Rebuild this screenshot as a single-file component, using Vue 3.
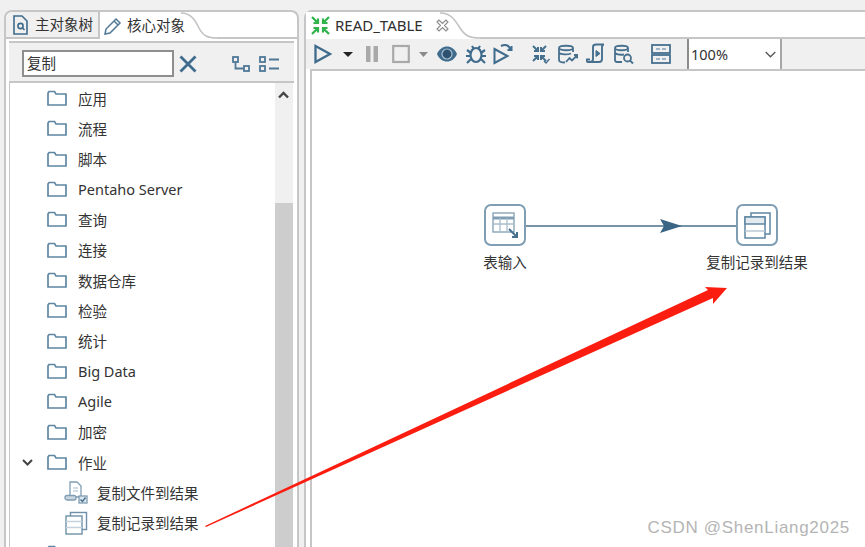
<script setup>
const folders = ['应用', '流程', '脚本', 'Pentaho Server', '查询', '连接', '数据仓库', '检验', '统计', 'Big Data', 'Agile', '加密']
</script>

<template>
  <div class="page">
    <section class="left-panel">
      <div class="tabs">
        <div class="tab tab-idle">
          <svg width="15" height="20" viewBox="0 0 15 20" fill="none" stroke="#3f6b8c" stroke-width="1.6">
            <path d="M1 1h8l5 5v13H1z" />
            <circle cx="7.5" cy="11" r="2.6" />
            <path d="M9.5 13l2 2" />
          </svg>
          <span>主对象树</span>
        </div>
        <div class="tab tab-active">
          <svg width="19" height="20" viewBox="0 0 19 20" fill="none" stroke="#4f7896" stroke-width="1.5">
            <path d="M2 18l1-5L13 3l4 4L7 17z" />
            <path d="M11 5l4 4" />
          </svg>
          <span>核心对象</span>
        </div>
        <svg class="tab-curve" width="36" height="27" viewBox="0 0 36 27" fill="none">
          <path d="M0 1C10 1 14 8 18 16S27 26 36 26" stroke="#c2c2c2" stroke-width="1.6" />
        </svg>
        <div class="tab-rest"></div>
      </div>

      <div class="search-bar">
        <div class="search-input">复制</div>
        <svg class="clear-icon" width="18" height="18" viewBox="0 0 18 18" stroke="#3f6b8c" stroke-width="2.8">
          <path d="M1.500 1.500l15 15M16.500 1.500l-15 15" />
        </svg>
        <svg class="tree-icon" width="18" height="16" viewBox="0 0 18 16" fill="none" stroke="#4f7896" stroke-width="1.8">
          <rect x="1" y="1" width="5" height="5" />
          <rect x="12" y="10" width="5" height="5" />
          <path d="M3.500 6v6.500H12" />
        </svg>
        <svg class="list-icon" width="21" height="16" viewBox="0 0 21 16" fill="none" stroke="#4f7896" stroke-width="1.8">
          <rect x="1" y="1" width="5" height="5" />
          <rect x="1" y="10" width="5" height="5" />
          <path d="M10 3.500h10M10 12.500h10" />
        </svg>
      </div>

      <div class="tree-area">
        <ul class="tree">
          <li v-for="name in folders" :key="name" class="row">
            <svg class="folder" width="20" height="16" viewBox="0 0 20 16" fill="#fff" stroke="#5f86a3" stroke-width="1.7">
              <path d="M1 3v12h18V4H9L7.500 1.500H2z" />
            </svg>
            <span>{{ name }}</span>
          </li>
          <li class="row">
            <svg class="chevron" width="11" height="7" viewBox="0 0 11 7" fill="none" stroke="#444" stroke-width="2">
              <path d="M1 1l4.500 4.500L10 1" />
            </svg>
            <svg class="folder" width="20" height="16" viewBox="0 0 20 16" fill="#fff" stroke="#5f86a3" stroke-width="1.7">
              <path d="M1 3v12h18V4H9L7.500 1.500H2z" />
            </svg>
            <span>作业</span>
          </li>
          <li class="row child">
            <svg width="24" height="24" viewBox="0 0 24 24" fill="#fff" stroke="#7f9db3" stroke-width="1.3">
              <path d="M6 2h7l4 4v11H6z" />
              <path d="M9 8h5M9 11h5" stroke="#c4d2dd" />
              <rect x="1" y="15.500" width="11" height="4.500" rx="2" fill="#c9d6df" />
              <rect x="15" y="16" width="8" height="7" fill="#dfe7ed" />
              <path d="M16.500 19.500l2 2 3-4" stroke="#3f6b8c" fill="none" />
            </svg>
            <span>复制文件到结果</span>
          </li>
          <li class="row child">
            <svg width="24" height="24" viewBox="0 0 24 24" fill="#fff" stroke="#6f90a8" stroke-width="1.4">
              <rect x="6.500" y="1.500" width="16" height="17" />
              <rect x="2" y="5" width="16" height="18" />
              <path d="M2 10.500h16M2 16.500h16" stroke="#c4d2dd" />
            </svg>
            <span>复制记录到结果</span>
          </li>
          <li class="row">
            <svg class="folder" width="20" height="16" viewBox="0 0 20 16" fill="#fff" stroke="#5f86a3" stroke-width="1.7">
              <path d="M1 3v12h18V4H9L7.500 1.500H2z" />
            </svg>
          </li>
        </ul>
        <div class="scrollbar">
          <svg class="scroll-up" width="11" height="8" viewBox="0 0 11 8" fill="none" stroke="#444" stroke-width="2.4">
            <path d="M1 6.500l4.500-4.500L10 6.500" />
          </svg>
          <div class="scroll-thumb"></div>
        </div>
      </div>
    </section>

    <section class="editor">
      <div class="tabs">
        <div class="tab tab-active editor-tab">
          <svg width="19" height="19" viewBox="0 0 19 19" fill="none" stroke="#2fb34a" stroke-width="2.2">
            <path d="M1 1l6 6M7 2.500V7H2.500M18 1l-6 6M12 2.500V7h4.500M1 18l6-6M7 16.500V12H2.500M18 18l-6-6M12 16.500V12h4.500" />
          </svg>
          <span class="editor-title">READ_TABLE</span>
          <svg class="close" width="13" height="13" viewBox="0 0 13 13" fill="#fff" stroke="#8b8b8b" stroke-width="1.1">
            <path d="M1 3l2-2 3.500 3.500L10 1l2 2-3.500 3.500L12 10l-2 2-3.500-3.500L3 12l-2-2 3.500-3.500z" />
          </svg>
        </div>
        <svg class="tab-curve" width="40" height="27" viewBox="0 0 40 27" fill="none">
          <path d="M0 1C11 1 15 8 20 16S30 26 40 26" stroke="#c2c2c2" stroke-width="1.6" />
        </svg>
        <div class="tab-rest"></div>
      </div>

      <div class="toolbar">
        <svg class="ml-3" width="18" height="24" viewBox="0 0 18 24" fill="none" stroke="#3f6b8c" stroke-width="2.3">
          <path d="M1.500 4l14.500 8-14.500 8z" />
        </svg>
        <svg class="ml-11" width="10" height="24" viewBox="0 0 10 24"><path d="M0 10h10l-5 5z" fill="#222" /></svg>
        <svg class="ml-13" width="12" height="24" viewBox="0 0 12 24" fill="#a9a9a9">
          <rect y="4" width="4.500" height="16" /><rect x="7.500" y="4" width="4.500" height="16" />
        </svg>
        <svg class="ml-14" width="18" height="24" viewBox="0 0 18 24" fill="none" stroke="#a9a9a9" stroke-width="2.2">
          <rect x="1.200" y="4" width="15.600" height="16" />
        </svg>
        <svg class="ml-9" width="9" height="24" viewBox="0 0 9 24"><path d="M0 10h9l-4.500 5z" fill="#8a8a8a" /></svg>
        <svg class="ml-9" width="20" height="24" viewBox="0 0 20 24">
          <path d="M0 12C4 2 16 2 20 12 16 22 4 22 0 12z" fill="#3f6b8c" />
          <circle cx="10" cy="12" r="5" fill="#2c5270" stroke="#a7bfd0" stroke-width="1.200" />
        </svg>
        <svg class="ml-9" width="20" height="24" viewBox="0 0 20 24" fill="none" stroke="#3f6b8c" stroke-width="2.200">
          <ellipse cx="10" cy="13" rx="5.500" ry="7" />
          <path d="M6 4l2 3M14 4l-2 3M1 8l4 3M19 8l-4 3M0 14h4M20 14h-4M1 21l4-4M19 21l-4-4" />
        </svg>
        <svg class="ml-7" width="20" height="24" viewBox="0 0 20 24" fill="none" stroke="#3f6b8c" stroke-width="2">
          <path d="M1.500 7l13 7-13 7z" />
          <path d="M8 4c4-2 8-1 9 3M18.500 4v4h-4" />
        </svg>
        <svg class="ml-19" width="18" height="24" viewBox="0 0 18 24" fill="none" stroke="#46708e" stroke-width="2">
          <path d="M1 4l5 5M6 5v4H2M14 4l-5 5M9 5v4h4M1 19l5-5M6 18v-4H2M14 19l-5-5M9 18v-4h4" />
          <path d="M12 19l2 2 3.500-4" stroke-width="1.400" />
        </svg>
        <svg class="ml-8" width="20" height="24" viewBox="0 0 20 24" fill="none" stroke="#46708e" stroke-width="1.800">
          <path d="M1 6v12c0 1.500 3 2.500 6 2.500M15 6v4M1 6c0-3 14-3 14 0s-14 3-14 0zM1 11c2 1.500 8 2 12 .5" />
          <path d="M8 20l3.500-4 2.500 2.500 5-5M16 13h3.500v3.500" />
        </svg>
        <svg class="ml-8" width="20" height="24" viewBox="0 0 20 24" fill="none" stroke="#46708e" stroke-width="1.900">
          <path d="M4 20c2.500 0 3-1.500 3-3V5c0-1.500 1-2.500 3-2.500h8c-1.500 0-2 1-2 2.500v1M16 6v11c0 2-1 3-3 3H2c-1 0-1.500-1-1.500-2.500H4" />
          <path d="M10 8.500l4 3-4 3z" fill="#46708e" stroke-width="1" />
        </svg>
        <svg class="ml-8" width="20" height="24" viewBox="0 0 20 24" fill="none" stroke="#46708e" stroke-width="1.800">
          <path d="M8 20H3c-1.500 0-2-1-2-2V6c0-3 13-3 13 0v4M1 6c0 3 13 3 13 0M1 11c2 1.500 6 2 9 1.500" />
          <circle cx="13.500" cy="16" r="3.500" />
          <path d="M16 18.500l3 3" />
        </svg>
        <svg class="ml-17" width="20" height="24" viewBox="0 0 20 24" fill="none" stroke="#46708e" stroke-width="1.800">
          <rect x="1" y="3" width="18" height="8" />
          <rect x="1" y="13" width="18" height="8" />
          <path d="M5 7h4M11 7h4M5 17h4M11 17h4" stroke="#9db5c6" />
        </svg>
        <div class="zoom-combo">
          <span>100%</span>
          <svg width="11" height="7" viewBox="0 0 11 7" fill="none" stroke="#555" stroke-width="1.300">
            <path d="M.7 1l4.800 4.800L10.300 1" />
          </svg>
        </div>
      </div>

      <div class="canvas">
        <svg class="hop" width="212" height="16" viewBox="0 0 212 16">
          <path d="M0 8h212" stroke="#4a6f8a" stroke-width="1.500" />
          <path d="M134 1l22 7-22 7 4-7z" fill="#3a6585" />
        </svg>
        <div class="step step-input">
          <div class="step-box">
            <svg width="30" height="30" viewBox="0 0 30 30" fill="#fff" stroke="#7f9db3" stroke-width="1.300">
              <rect x="3" y="3" width="21" height="19" />
              <path d="M3 8h21" stroke-width="3" />
              <path d="M3 14h21M10 8v14M17 8v14" stroke="#a9bdcb" />
              <path d="M19 19l8 8M27 22v5h-5" fill="none" stroke="#46708e" stroke-width="2" />
            </svg>
          </div>
          <span>表输入</span>
        </div>
        <div class="step step-copy">
          <div class="step-box">
            <svg width="30" height="30" viewBox="0 0 30 30" fill="#fff" stroke="#5f86a3" stroke-width="1.500">
              <rect x="9" y="3" width="19" height="21" />
              <rect x="3" y="7" width="20" height="21" />
              <path d="M3 7h20v7H3z" fill="#e3ebf1" stroke="#5f86a3" />
              <path d="M3 21h20" stroke="#b9c9d5" />
            </svg>
          </div>
          <span>复制记录到结果</span>
        </div>
      </div>
    </section>

    <svg class="red-arrow" width="865" height="547" viewBox="0 0 865 547">
      <path d="M205 526L708 290 705 287 727 288 713 304 713 298 206 527z" fill="#fb1d10" />
    </svg>
    <div class="watermark">CSDN @ShenLiang2025</div>
  </div>
</template>

<style>
html, body {
  margin: 0;
  background: #f0f0f0;
}
</style>

<style scoped>
.page {
  position: relative;
  display: flex;
  width: 865px;
  height: 547px;
  padding-top: 10px;
  box-sizing: border-box;
  overflow: hidden;
  background: #f0f0f0;
  color: #333;
  font-family: "Noto Sans", "Noto Sans CJK SC", sans-serif;
  font-size: 14.5px;
}

.left-panel {
  display: flex;
  flex-direction: column;
  flex: none;
  width: 295px;
  margin-left: 4px;
  border: 2px solid #c6c6c6;
  border-bottom: 0;
  border-radius: 8px 8px 0 0;
  box-sizing: border-box;
  background: #fff;
}

.tabs {
  display: flex;
  flex: none;
  height: 27px;
}

.tab {
  display: flex;
  flex: none;
  align-items: center;
  box-sizing: border-box;
  height: 27px;
  line-height: 1;
  white-space: nowrap;
}

.tab svg {
  flex: none;
}

.tab-idle {
  width: 94px;
  padding-left: 7px;
  gap: 7px;
  background: #f0f0f0;
  border-bottom: 2px solid #c6c6c6;
  border-right: 2px solid #c6c6c6;
  border-radius: 8px 0 0 0;
}

.tab-active {
  width: 81px;
  padding-left: 3px;
  gap: 5px;
  background: #fff;
}

.tab-curve {
  flex: none;
}

.tab-rest {
  flex: 1;
  border-bottom: 2px solid #c6c6c6;
}

.search-bar {
  display: flex;
  align-items: center;
  flex: none;
  height: 42px;
  margin: 2px 3px 0;
  padding: 3px 0 0 13px;
  background: #f0f0f0;
  border-top: 2px solid #c6c6c6;
  border-bottom: 2px solid #c6c6c6;
  box-sizing: border-box;
}

.search-input {
  flex: none;
  width: 152px;
  height: 27px;
  padding-left: 3px;
  box-sizing: border-box;
  border: 2px solid #8e8e8e;
  background: #fff;
  line-height: 23px;
}

.clear-icon {
  margin-left: 5px;
}

.tree-icon {
  margin-left: 35px;
}

.list-icon {
  margin-left: 9px;
}

.tree-area {
  display: flex;
  flex: 1;
  min-height: 0;
  margin: 0 3px;
  border-left: 1px solid #c6c6c6;
  overflow: hidden;
}

.tree {
  flex: 1;
  margin: 0;
  padding: 0;
  list-style: none;
  background: #fff;
}

.row {
  display: flex;
  align-items: center;
  position: relative;
  height: 30.33px;
  padding-left: 37px;
}

.row .folder {
  flex: none;
  margin-right: 11px;
}

.chevron {
  position: absolute;
  left: 12px;
}

.child {
  padding-left: 54px;
}

.child svg {
  flex: none;
  margin-right: 9px;
}

.scrollbar {
  display: flex;
  flex-direction: column;
  flex: none;
  width: 18px;
  margin-right: 1px;
  padding-top: 8px;
  box-sizing: border-box;
  background: #f0f0f0;
}

.scroll-up {
  flex: none;
  margin-left: 3px;
}

.scroll-thumb {
  flex: 1;
  margin-top: 104px;
  background: #cdcdcd;
}

.editor {
  display: flex;
  flex-direction: column;
  flex: 1;
  min-width: 0;
  margin-left: 5px;
  border-top: 2px solid #c6c6c6;
  border-left: 2px solid #c6c6c6;
  border-radius: 8px 0 0 0;
  background: #fff;
}

.editor-tab {
  width: 134px;
  padding-left: 5px;
  gap: 5px;
}

.editor-title {
  font-size: 15px;
  color: #2f2f2f;
}

.close {
  margin-left: 8px;
}

.toolbar {
  display: flex;
  align-items: center;
  flex: none;
  height: 30px;
  padding-left: 5px;
  background: #f0f0f0;
  box-sizing: border-box;
}

.toolbar svg {
  flex: none;
}

.ml-3 { margin-left: 3px; }
.ml-7 { margin-left: 7px; }
.ml-8 { margin-left: 8px; }
.ml-9 { margin-left: 9px; }
.ml-11 { margin-left: 11px; }
.ml-13 { margin-left: 13px; }
.ml-14 { margin-left: 14px; }
.ml-17 { margin-left: 17px; }
.ml-19 { margin-left: 19px; }

.zoom-combo {
  display: flex;
  align-items: center;
  justify-content: space-between;
  align-self: stretch;
  width: 95px;
  margin-left: 16px;
  padding: 0 4px 0 2px;
  box-sizing: border-box;
  border-left: 2px solid #8c8c8c;
  border-right: 2px solid #a6a6a6;
  background: #fff;
}

.canvas {
  position: relative;
  flex: 1;
  margin-left: 4px;
  border-top: 2px solid #c6c6c6;
  border-left: 2px solid #c6c6c6;
  background: #fff;
}

.hop {
  position: absolute;
  left: 214px;
  top: 147px;
}

.step {
  position: absolute;
  top: 133px;
  display: flex;
  flex-direction: column;
  align-items: center;
  gap: 6px;
  white-space: nowrap;
  line-height: 20px;
}

.step-input {
  left: 153px;
  width: 80px;
}

.step-copy {
  left: 385px;
  width: 120px;
}

.step-box {
  display: flex;
  align-items: center;
  justify-content: center;
  width: 42px;
  height: 42px;
  box-sizing: border-box;
  border: 2px solid #7f9db3;
  border-radius: 7px;
  background: #fff;
}

.red-arrow {
  position: absolute;
  left: 0;
  top: 0;
  pointer-events: none;
}

.watermark {
  position: absolute;
  right: 15px;
  bottom: 9px;
  font-family: "Liberation Sans", sans-serif;
  font-size: 17px;
  letter-spacing: 0.7px;
  color: #b4b4b4;
}
</style>
